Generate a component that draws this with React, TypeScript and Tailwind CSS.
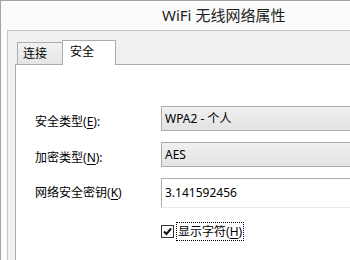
import React from "react";

const font = { fontFamily: '"Noto Sans", "Noto Sans CJK SC", sans-serif' };

const Acc = ({ k }: { k: string }) => (
  <>
    (<span className="underline underline-offset-2">{k}</span>)
  </>
);

const App = () => {
  return (
    <div
      className="w-[350px] h-[260px] overflow-hidden bg-[#fbfbfb] border-l border-t border-[#a3a3a3] flex flex-col text-[12px] text-black"
      style={font}
    >
      {/* title bar */}
      <div className="h-[29px] shrink-0 flex items-center pl-[161px] text-[15px] text-[#1e1e1e] whitespace-nowrap">
        WiFi 无线网络属性
      </div>

      <div className="flex-1 flex pl-[6px]">
        {/* client area */}
        <div className="flex-1 flex flex-col bg-[#f0f0f0] border-l border-t border-[#c6c6c6] pl-[7px] pt-[9px]">
          <div className="flex items-end ml-[2px]">
            <div className="w-[45px] h-[22px] border-l border-t border-[#acacac] bg-gradient-to-b from-[#f1f1f1] to-[#e6e6e6] flex items-center pl-[5px]">
              连接
            </div>
            <div className="relative z-10 w-[54px] h-[25px] -mb-px border-l border-t border-r border-[#acacac] bg-white flex items-start pt-[2px] pl-[7px]">
              安全
            </div>
          </div>

          <div className="flex-1 w-[400px] bg-white border-l border-t border-[#acacac] pl-[19px] pt-[41px]">
            <div className="grid grid-cols-[126px_250px] gap-y-[11px] items-center">
              <div className="pt-[6px]">
                安全类型<Acc k="E" />:
              </div>
              <div className="h-[25px] border border-[#acacac] bg-gradient-to-b from-[#f0f0f0] to-[#e3e3e3] flex items-center pl-[3px]">
                WPA2 - 个人
              </div>

              <div className="pt-[6px]">
                加密类型<Acc k="N" />:
              </div>
              <div className="h-[25px] border border-[#acacac] bg-gradient-to-b from-[#f0f0f0] to-[#e3e3e3] flex items-center pl-[3px]">
                AES
              </div>

              <div>
                网络安全密钥<Acc k="K" />
              </div>
              <div className="h-[30px] border border-[#abadb3] border-b-[#e3e9ef] border-r-[#e3e9ef] bg-white flex items-center pl-[3px]">
                3.141592456
              </div>
            </div>

            <div className="flex items-center ml-[126px] mt-[14px]">
              <div className="w-[13px] h-[13px] border border-[#333333] bg-white flex items-center justify-center">
                <svg width="9" height="9" viewBox="0 0 9 9">
                  <path d="M1 4.5 L3.5 7 L8 1.5" stroke="#111" strokeWidth="2" fill="none" />
                </svg>
              </div>
              <div className="ml-[2px] px-[1px] py-[1px] border border-dotted border-black leading-[15px]">
                显示字符<Acc k="H" />
              </div>
            </div>
          </div>
        </div>
      </div>
    </div>
  );
};

export default App;
